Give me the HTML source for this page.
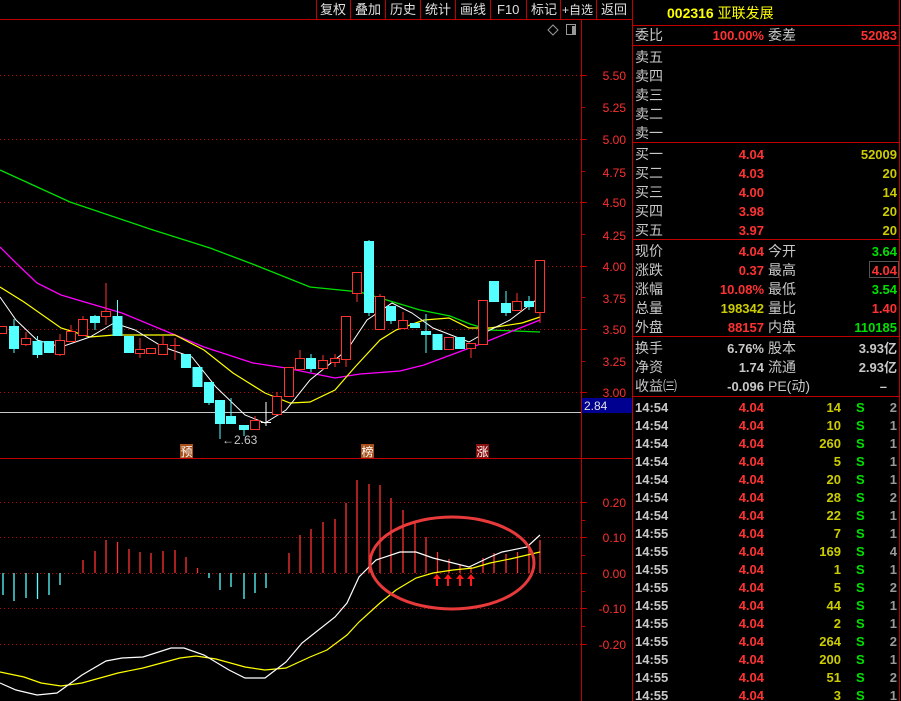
<!DOCTYPE html>
<html><head><meta charset="utf-8"><style>
body{margin:0;background:#000;width:901px;height:701px;overflow:hidden;font-family:"Liberation Sans","Noto Sans CJK SC",sans-serif}
svg{position:absolute;left:0;top:0}
text{font-family:"Liberation Sans","Noto Sans CJK SC",sans-serif}
.w{fill:#e0e0e0}
</style></head><body>
<svg width="901" height="701" viewBox="0 0 901 701" xmlns="http://www.w3.org/2000/svg">
<!-- toolbar -->
<g stroke="#c00000" stroke-width="1">
<line x1="0" y1="19.5" x2="632" y2="19.5"/>
<line x1="316.5" y1="0" x2="316.5" y2="19"/><line x1="350.5" y1="0" x2="350.5" y2="19"/><line x1="385.5" y1="0" x2="385.5" y2="19"/><line x1="420.5" y1="0" x2="420.5" y2="19"/><line x1="455.5" y1="0" x2="455.5" y2="19"/><line x1="490.5" y1="0" x2="490.5" y2="19"/><line x1="526.5" y1="0" x2="526.5" y2="19"/><line x1="560.5" y1="0" x2="560.5" y2="19"/><line x1="596.5" y1="0" x2="596.5" y2="19"/>
<line x1="581.5" y1="20" x2="581.5" y2="701"/>
<line x1="632.5" y1="0" x2="632.5" y2="701"/>
<line x1="899.5" y1="0" x2="899.5" y2="701"/>
<line x1="0" y1="458.5" x2="632" y2="458.5"/>
</g>
<g font-size="13" class="w" fill="#e0e0e0">
<text x="320" y="14">复权</text><text x="355" y="14">叠加</text><text x="390" y="14">历史</text><text x="425" y="14">统计</text><text x="460" y="14">画线</text><text x="497" y="14">F10</text><text x="531" y="14">标记</text><text x="562" y="14" font-size="12">+自选</text><text x="601" y="14">返回</text>
</g>
<!-- icons -->
<path d="M553 25 L558 30 L553 35 L548 30 Z" fill="none" stroke="#999"/>
<rect x="566.5" y="24.5" width="9" height="10" fill="none" stroke="#999"/><rect x="572" y="26" width="3" height="8" fill="#999"/>
<!-- grid upper -->
<g stroke="#c00000" stroke-dasharray="1,3">
<line x1="0" y1="75.5" x2="581" y2="75.5"/><line x1="0" y1="139.5" x2="581" y2="139.5"/><line x1="0" y1="202.5" x2="581" y2="202.5"/><line x1="0" y1="266.5" x2="581" y2="266.5"/><line x1="0" y1="329.5" x2="581" y2="329.5"/><line x1="0" y1="392.5" x2="581" y2="392.5"/>
<line x1="0" y1="502.5" x2="581" y2="502.5"/><line x1="0" y1="537.5" x2="581" y2="537.5"/><line x1="0" y1="573.5" x2="581" y2="573.5"/><line x1="0" y1="608.5" x2="581" y2="608.5"/><line x1="0" y1="644.5" x2="581" y2="644.5"/>
</g>
<g stroke="#c00000">
<line x1="581" y1="75.5" x2="587" y2="75.5"/><line x1="581" y1="107.5" x2="585" y2="107.5"/><line x1="581" y1="139.5" x2="587" y2="139.5"/><line x1="581" y1="171.5" x2="585" y2="171.5"/><line x1="581" y1="202.5" x2="587" y2="202.5"/><line x1="581" y1="234.5" x2="585" y2="234.5"/><line x1="581" y1="266.5" x2="587" y2="266.5"/><line x1="581" y1="297.5" x2="585" y2="297.5"/><line x1="581" y1="329.5" x2="587" y2="329.5"/><line x1="581" y1="361.5" x2="585" y2="361.5"/><line x1="581" y1="392.5" x2="587" y2="392.5"/>
<line x1="581" y1="502.5" x2="587" y2="502.5"/><line x1="581" y1="520.5" x2="585" y2="520.5"/><line x1="581" y1="537.5" x2="587" y2="537.5"/><line x1="581" y1="555.5" x2="585" y2="555.5"/><line x1="581" y1="573.5" x2="587" y2="573.5"/><line x1="581" y1="591.5" x2="585" y2="591.5"/><line x1="581" y1="608.5" x2="587" y2="608.5"/><line x1="581" y1="626.5" x2="585" y2="626.5"/><line x1="581" y1="644.5" x2="587" y2="644.5"/>
</g>
<g fill="#ff3030" font-size="12" text-anchor="end">
<text x="626" y="80">5.50</text><text x="626" y="112">5.25</text><text x="626" y="144">5.00</text><text x="626" y="177">4.75</text><text x="626" y="207">4.50</text><text x="626" y="240">4.25</text><text x="626" y="271">4.00</text><text x="626" y="303">3.75</text><text x="626" y="334">3.50</text><text x="626" y="366">3.25</text><text x="626" y="397">3.00</text>
<text x="626" y="507">0.20</text><text x="626" y="542">0.10</text><text x="626" y="578">0.00</text><text x="626" y="613">-0.10</text><text x="626" y="649">-0.20</text>
</g>
<rect x="582" y="398" width="50" height="15" fill="#000090"/>
<text x="584" y="410" font-size="12" fill="#e0e0e0">2.84</text>
<line x1="0" y1="412.5" x2="581" y2="412.5" stroke="#c8c8c8"/>
<!-- MAs -->
<polyline fill="none" stroke="#00e000" stroke-width="1.3" points="0,170 70,202 150,229 210,248 255,265 310,287 360,292 380,298 420,310 450,316 470,324 490,330 540,332"/>
<polyline fill="none" stroke="#ff00ff" stroke-width="1.3" points="0,247 16,263 37,283 61,295 122,313 204,347 253,363 286,368 335,378 360,374 400,371 424,365 483,343 510,332 540,320"/>
<polyline fill="none" stroke="#ffff00" stroke-width="1.2" points="0,287 24,302 61,328 90,337 114,335 175,335 204,350 233,373 265,393 290,403 310,402 335,390 355,367 380,340 396,330 424,320 449,318 469,328 490,328 522,323 540,317"/>
<polyline fill="none" stroke="#ffffff" stroke-width="1" points="0,297 16,320 37,340 61,347 90,337 114,323 135,330 163,347 192,357 216,387 245,415 265,423 286,410 310,380 347,350 367,320 392,303 412,313 433,328 469,342 490,330 510,320 540,297"/>
<!-- candles -->
<g stroke-width="1">
<g stroke="#ff3232" fill="#000">
<rect x="-2.5" y="326.5" width="9" height="7"/>
<line x1="26" y1="332" x2="26" y2="346" /><rect x="21.5" y="338.5" width="9" height="6"/>
<line x1="60" y1="334" x2="60" y2="356"/><rect x="55.5" y="340.5" width="9" height="14"/>
<line x1="71" y1="325" x2="71" y2="331"/><rect x="66.5" y="331.5" width="9" height="10"/>
<line x1="83" y1="316" x2="83" y2="319"/><rect x="78.5" y="319.5" width="9" height="16"/>
<line x1="106" y1="283" x2="106" y2="325"/><rect x="101.5" y="311.5" width="9" height="5"/>
<line x1="140" y1="338" x2="140" y2="358"/><rect x="135.5" y="349.5" width="9" height="4"/>
<rect x="146.5" y="348.5" width="9" height="5"/>
<line x1="163" y1="336" x2="163" y2="354"/><rect x="158.5" y="344.5" width="9" height="10"/>
<line x1="175" y1="338" x2="175" y2="360"/><line x1="170" y1="345.5" x2="180" y2="345.5"/>
<line x1="255" y1="416" x2="255" y2="420"/><rect x="250.5" y="420.5" width="9" height="9"/>
<line x1="277" y1="392" x2="277" y2="396"/><rect x="272.5" y="396.5" width="9" height="18"/>
<rect x="284.5" y="367.5" width="9" height="29"/>
<line x1="300" y1="350" x2="300" y2="358"/><rect x="295.5" y="358.5" width="9" height="11"/>
<line x1="323" y1="355" x2="323" y2="370"/><rect x="318.5" y="360.5" width="9" height="8"/>
<line x1="335" y1="354" x2="335" y2="367"/><rect x="330.5" y="358.5" width="9" height="4"/>
<line x1="346" y1="359" x2="346" y2="367"/><rect x="341.5" y="316.5" width="9" height="43"/>
<line x1="357" y1="293" x2="357" y2="302"/><rect x="352.5" y="272.5" width="9" height="21"/>
<line x1="380" y1="294" x2="380" y2="296"/><rect x="375.5" y="296.5" width="9" height="33"/>
<line x1="403" y1="312" x2="403" y2="320"/><rect x="398.5" y="320.5" width="9" height="8"/>
<rect x="444.5" y="337.5" width="9" height="12"/>
<line x1="471" y1="348" x2="471" y2="358"/><rect x="466.5" y="343.5" width="9" height="5"/>
<rect x="478.5" y="300.5" width="9" height="44"/>
<line x1="517" y1="293" x2="517" y2="301"/><rect x="512.5" y="301.5" width="9" height="9"/>
<line x1="540" y1="312" x2="540" y2="323"/><rect x="535.5" y="260.5" width="9" height="52"/>
</g>
<g fill="#54ffff" stroke="#54ffff">
<line x1="14" y1="319" x2="14" y2="353"/><rect x="9.5" y="326.5" width="9" height="22"/>
<line x1="37.5" y1="336" x2="37.5" y2="358"/><rect x="33" y="341.5" width="9" height="13"/>
<rect x="44.5" y="341.5" width="9" height="11"/>
<line x1="95" y1="315" x2="95" y2="330"/><rect x="90.5" y="316.5" width="9" height="6"/>
<line x1="117.5" y1="300" x2="117.5" y2="336"/><rect x="113" y="316.5" width="9" height="19"/>
<rect x="124.5" y="336.5" width="9" height="16"/>
<rect x="181.5" y="354.5" width="9" height="13"/>
<rect x="193" y="367.5" width="9" height="19"/>
<line x1="209" y1="382" x2="209" y2="405"/><rect x="204.5" y="382.5" width="9" height="20"/>
<line x1="220" y1="400" x2="220" y2="439"/><rect x="215.5" y="400.5" width="9" height="23"/>
<line x1="231" y1="398" x2="231" y2="424"/><rect x="226.5" y="416.5" width="9" height="7"/>
<line x1="244" y1="429" x2="244" y2="436"/><rect x="239.5" y="425.5" width="9" height="4"/>
<line x1="311" y1="354" x2="311" y2="372"/><rect x="306.5" y="358.5" width="9" height="10"/>
<line x1="369" y1="240" x2="369" y2="316"/><rect x="364.5" y="241.5" width="9" height="71"/>
<line x1="391" y1="306" x2="391" y2="324"/><rect x="386.5" y="306.5" width="9" height="14"/>
<rect x="410.5" y="323.5" width="9" height="4"/>
<line x1="426" y1="314" x2="426" y2="353"/><rect x="421.5" y="331.5" width="9" height="3"/>
<rect x="433" y="334.5" width="9" height="15"/>
<rect x="455.5" y="337.5" width="9" height="11"/>
<rect x="489.5" y="281.5" width="9" height="20"/>
<line x1="506" y1="291" x2="506" y2="316"/><rect x="501.5" y="303.5" width="9" height="9"/>
<line x1="529" y1="296" x2="529" y2="310"/><rect x="524.5" y="301.5" width="9" height="5"/>
</g>
<line x1="266" y1="402" x2="266" y2="426" stroke="#fff"/><line x1="261" y1="422.5" x2="271" y2="422.5" stroke="#fff"/>
</g>
<text x="222" y="444" font-size="12" fill="#c8c8c8">←2.63</text>
<rect x="180" y="444" width="13" height="14" fill="#a8501c"/><text x="180.5" y="456" font-size="12" fill="#fff">预</text>
<rect x="361" y="444" width="13" height="14" fill="#a8501c"/><text x="361.5" y="456" font-size="12" fill="#fff">榜</text>
<rect x="476" y="444" width="13" height="14" fill="#8a1010"/><text x="476.5" y="456" font-size="12" fill="#fff">涨</text>
<!-- MACD bars -->
<g stroke="#54ffff" stroke-width="1.3">
<line x1="3" y1="573" x2="3" y2="595"/><line x1="14" y1="573" x2="14" y2="601"/><line x1="26" y1="573" x2="26" y2="598"/><line x1="37.5" y1="573" x2="37.5" y2="599"/><line x1="49" y1="573" x2="49" y2="595"/><line x1="60" y1="573" x2="60" y2="585"/>
<line x1="209" y1="573" x2="209" y2="578"/><line x1="220" y1="573" x2="220" y2="590"/><line x1="231" y1="573" x2="231" y2="587"/><line x1="244" y1="573" x2="244" y2="599"/><line x1="255" y1="573" x2="255" y2="593"/><line x1="266" y1="573" x2="266" y2="588"/>
</g>
<g stroke="#ff3232" stroke-width="1.3">
<line x1="83" y1="573" x2="83" y2="560"/><line x1="95" y1="573" x2="95" y2="551"/><line x1="106" y1="573" x2="106" y2="540"/><line x1="117.5" y1="573" x2="117.5" y2="542"/><line x1="129" y1="573" x2="129" y2="549"/><line x1="140" y1="573" x2="140" y2="552"/><line x1="151" y1="573" x2="151" y2="553"/><line x1="163" y1="573" x2="163" y2="551"/><line x1="175" y1="573" x2="175" y2="550"/><line x1="186" y1="573" x2="186" y2="557"/><line x1="197.5" y1="573" x2="197.5" y2="568"/>
<line x1="289" y1="573" x2="289" y2="553"/><line x1="300" y1="573" x2="300" y2="535"/><line x1="311" y1="573" x2="311" y2="529"/><line x1="323" y1="573" x2="323" y2="522"/><line x1="335" y1="573" x2="335" y2="519"/><line x1="346" y1="573" x2="346" y2="503"/><line x1="357" y1="573" x2="357" y2="480"/><line x1="369" y1="573" x2="369" y2="484"/><line x1="380" y1="573" x2="380" y2="485"/><line x1="391" y1="573" x2="391" y2="498"/><line x1="403" y1="573" x2="403" y2="510"/><line x1="415" y1="573" x2="415" y2="523"/><line x1="426" y1="573" x2="426" y2="537"/><line x1="437.5" y1="573" x2="437.5" y2="552"/><line x1="449" y1="573" x2="449" y2="559"/><line x1="460" y1="573" x2="460" y2="565"/><line x1="471" y1="573" x2="471" y2="567"/><line x1="483" y1="573" x2="483" y2="558"/><line x1="494" y1="573" x2="494" y2="553"/><line x1="506" y1="573" x2="506" y2="554"/><line x1="517.5" y1="573" x2="517.5" y2="552"/><line x1="529" y1="573" x2="529" y2="547"/><line x1="540" y1="573" x2="540" y2="540"/>
</g>
<polyline fill="none" stroke="#ffff00" stroke-width="1.2" points="0,672 24,677 41,683 61,686 82,683 118,673 143,668 180,658 196,656 216,659 245,667 265,670 286,668 310,657 327,650 347,635 359,622 380,603 396,590 416,578 433,573 453,570 473,568 490,563 510,559 540,552"/>
<polyline fill="none" stroke="#ffffff" stroke-width="1.2" points="0,683 16,690 37,695 57,693 82,675 106,661 122,658 143,657 171,648 184,648 204,655 229,670 245,678 265,678 286,662 302,643 335,617 347,603 359,577 376,560 400,552 416,552 433,558 441,560 469,567 490,557 502,552 527,547 540,535"/>
<ellipse cx="452" cy="563" rx="82" ry="46" fill="none" stroke="#e83a3a" stroke-width="3"/>
<g fill="#ff1a1a">
<path d="M437 574 l-4 5 h3 v7 h2 v-7 h3 z"/><path d="M448 574 l-4 5 h3 v7 h2 v-7 h3 z"/><path d="M460 574 l-4 5 h3 v7 h2 v-7 h3 z"/><path d="M471 574 l-4 5 h3 v7 h2 v-7 h3 z"/>
</g>
<!-- right panel lines -->
<g stroke="#c00000">
<line x1="632" y1="25.5" x2="899" y2="25.5"/><line x1="632" y1="45.5" x2="899" y2="45.5"/><line x1="632" y1="142.5" x2="899" y2="142.5"/><line x1="632" y1="239.5" x2="899" y2="239.5"/><line x1="632" y1="336.5" x2="899" y2="336.5"/><line x1="632" y1="396.5" x2="899" y2="396.5"/>
</g>
<text x="667" y="18" font-size="14" fill="#ffff00" font-weight="bold">002316 <tspan font-weight="normal">亚联发展</tspan></text>
<g font-size="14" fill="#c8c8c8">
<text x="635" y="40">委比</text><text x="768" y="40">委差</text>
<text x="635" y="62">卖五</text><text x="635" y="81">卖四</text><text x="635" y="100">卖三</text><text x="635" y="119">卖二</text><text x="635" y="138">卖一</text>
<text x="635" y="159">买一</text><text x="635" y="178">买二</text><text x="635" y="197">买三</text><text x="635" y="216">买四</text><text x="635" y="235">买五</text>
<text x="635" y="256">现价</text><text x="635" y="275">涨跌</text><text x="635" y="294">涨幅</text><text x="635" y="313">总量</text><text x="635" y="332">外盘</text>
<text x="768" y="256">今开</text><text x="768" y="275">最高</text><text x="768" y="294">最低</text><text x="768" y="313">量比</text><text x="768" y="332">内盘</text>
<text x="635" y="353">换手</text><text x="635" y="372">净资</text><text x="635" y="391">收益㈢</text>
<text x="768" y="353">股本</text><text x="768" y="372">流通</text><text x="768" y="391">PE(动)</text>
</g>
<g font-size="13" font-weight="bold" text-anchor="end">
<text x="764" y="40" fill="#ff3232">100.00%</text><text x="897" y="40" fill="#ff3232">52083</text>
<text x="764" y="159" fill="#ff3232">4.04</text><text x="764" y="178" fill="#ff3232">4.03</text><text x="764" y="197" fill="#ff3232">4.00</text><text x="764" y="216" fill="#ff3232">3.98</text><text x="764" y="235" fill="#ff3232">3.97</text>
<text x="897" y="159" fill="#cccc00">52009</text><text x="897" y="178" fill="#cccc00">20</text><text x="897" y="197" fill="#cccc00">14</text><text x="897" y="216" fill="#cccc00">20</text><text x="897" y="235" fill="#cccc00">20</text>
<text x="764" y="256" fill="#ff3232">4.04</text><text x="764" y="275" fill="#ff3232">0.37</text><text x="764" y="294" fill="#ff3232">10.08%</text><text x="764" y="313" fill="#cccc00">198342</text><text x="764" y="332" fill="#ff3232">88157</text>
<text x="897" y="256" fill="#00e000">3.64</text><text x="897" y="275" fill="#ff3232">4.04</text><text x="897" y="294" fill="#00e000">3.54</text><text x="897" y="313" fill="#ff3232">1.40</text><text x="897" y="332" fill="#00e000">110185</text>
<text x="764" y="353" fill="#c8c8c8">6.76%</text><text x="764" y="372" fill="#c8c8c8">1.74</text><text x="764" y="391" fill="#c8c8c8">-0.096</text>
<text x="897" y="353" fill="#c8c8c8">3.93亿</text><text x="897" y="372" fill="#c8c8c8">2.93亿</text><text x="887" y="391" fill="#c8c8c8">–</text>
</g>
<rect x="869.5" y="261.5" width="29" height="16" fill="none" stroke="#555"/>
<!-- ticks -->
<g font-size="13" font-weight="bold">
<g fill="#c8c8c8"><text x="635" y="412">14:54</text><text x="635" y="430">14:54</text><text x="635" y="448">14:54</text><text x="635" y="466">14:54</text><text x="635" y="484">14:54</text><text x="635" y="502">14:54</text><text x="635" y="520">14:54</text><text x="635" y="538">14:55</text><text x="635" y="556">14:55</text><text x="635" y="574">14:55</text><text x="635" y="592">14:55</text><text x="635" y="610">14:55</text><text x="635" y="628">14:55</text><text x="635" y="646">14:55</text><text x="635" y="664">14:55</text><text x="635" y="682">14:55</text><text x="635" y="700">14:55</text></g>
<g fill="#ff3232" text-anchor="end"><text x="764" y="412">4.04</text><text x="764" y="430">4.04</text><text x="764" y="448">4.04</text><text x="764" y="466">4.04</text><text x="764" y="484">4.04</text><text x="764" y="502">4.04</text><text x="764" y="520">4.04</text><text x="764" y="538">4.04</text><text x="764" y="556">4.04</text><text x="764" y="574">4.04</text><text x="764" y="592">4.04</text><text x="764" y="610">4.04</text><text x="764" y="628">4.04</text><text x="764" y="646">4.04</text><text x="764" y="664">4.04</text><text x="764" y="682">4.04</text><text x="764" y="700">4.04</text></g>
<g fill="#cccc00" text-anchor="end"><text x="841" y="412">14</text><text x="841" y="430">10</text><text x="841" y="448">260</text><text x="841" y="466">5</text><text x="841" y="484">20</text><text x="841" y="502">28</text><text x="841" y="520">22</text><text x="841" y="538">7</text><text x="841" y="556">169</text><text x="841" y="574">1</text><text x="841" y="592">5</text><text x="841" y="610">44</text><text x="841" y="628">2</text><text x="841" y="646">264</text><text x="841" y="664">200</text><text x="841" y="682">51</text><text x="841" y="700">3</text></g>
<g fill="#00e000"><text x="856" y="412">S</text><text x="856" y="430">S</text><text x="856" y="448">S</text><text x="856" y="466">S</text><text x="856" y="484">S</text><text x="856" y="502">S</text><text x="856" y="520">S</text><text x="856" y="538">S</text><text x="856" y="556">S</text><text x="856" y="574">S</text><text x="856" y="592">S</text><text x="856" y="610">S</text><text x="856" y="628">S</text><text x="856" y="646">S</text><text x="856" y="664">S</text><text x="856" y="682">S</text><text x="856" y="700">S</text></g>
<g fill="#9a9a9a" text-anchor="end"><text x="897" y="412">2</text><text x="897" y="430">1</text><text x="897" y="448">1</text><text x="897" y="466">1</text><text x="897" y="484">1</text><text x="897" y="502">2</text><text x="897" y="520">1</text><text x="897" y="538">1</text><text x="897" y="556">4</text><text x="897" y="574">1</text><text x="897" y="592">2</text><text x="897" y="610">1</text><text x="897" y="628">1</text><text x="897" y="646">2</text><text x="897" y="664">1</text><text x="897" y="682">2</text><text x="897" y="700">1</text></g>
</g>
</svg>
</body></html>
